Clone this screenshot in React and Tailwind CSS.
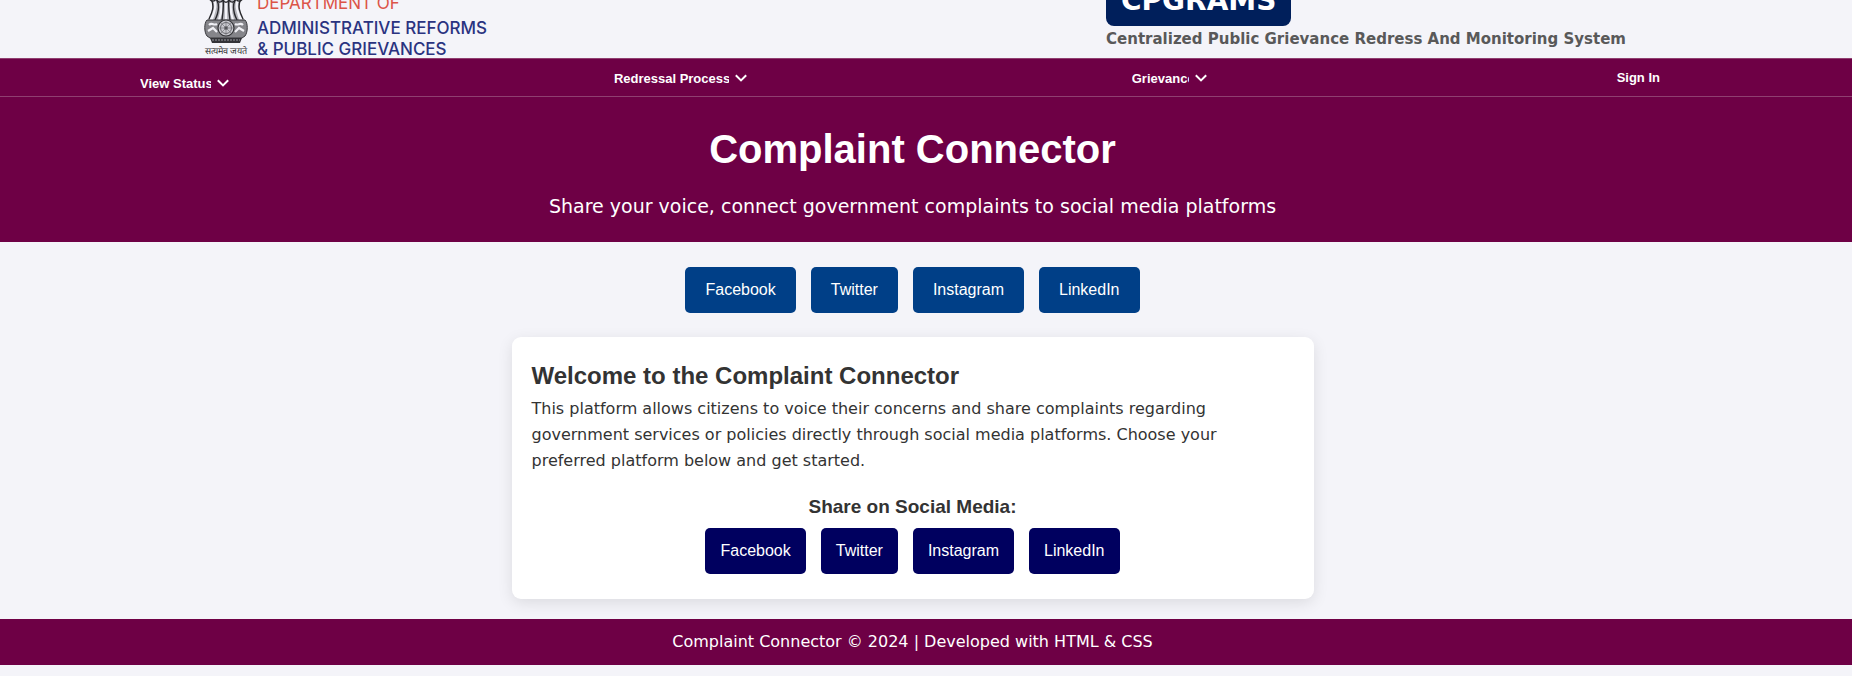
const platforms = [
  { name: 'Facebook', url: 'https://www.facebook.com' },
  { name: 'Twitter', url: 'https://twitter.com' },
  { name: 'Instagram', url: 'https://www.instagram.com' },
  { name: 'LinkedIn', url: 'https://www.linkedin.com' },
];

function Emblem() {
  return (
    <svg viewBox="0 0 44 66" className="w-11" fill="none" aria-hidden="true">
      <path d="M7 0h30l-2 42H9z" fill="#b4b4ba" />
      <path d="M4 17c0-8 2-14 5-17h26c3 3 5 9 5 17l-3 5H7z" fill="#4a4a4f" />
      <path d="M10 22c3 6 0 12-2 19M17 24c1 6 0 12-2 18M22 22v20M27 24c-1 6 0 12 2 18M34 22c-3 6 0 12 2 19" stroke="#f4f4f9" strokeWidth="2.200" strokeLinecap="round" />
      <g stroke="#29292d" strokeWidth="1.400" strokeLinecap="round">
        <path d="M7 21c4 7 1 14-2 20M13 22c3 7 1 14-2 20M19 21c1 8 0 14-1 21M25 21c-1 8 0 14 1 21M31 22c-3 7-1 14 2 20M37 21c-4 7-1 14 2 20" />
        <path d="M5 20c2 4 5 4 7 1 2 4 5 4 7 1 1 3 5 3 6 0 2 3 5 3 7-1 2 3 5 3 7-1" />
      </g>
      <path d="M3 42h38c3 3 3 12 0 16l-3 2H6l-3-2c-3-4-3-13 0-16z" fill="#85858a" stroke="#38383c" />
      <path d="M5 47c3-3 5 1 8-1M4 53l5-3 4 4M31 46c3 2 5-2 8 1M31 54l4-4 5 3" stroke="#f0f0f5" strokeWidth="2.200" />
      <circle cx="22" cy="50" r="8" fill="#c8c8ce" stroke="#333337" strokeWidth="1.200" />
      <circle cx="22" cy="50" r="5.500" stroke="#66666b" />
      <path d="M22 43v14M15 50h14M17 45l10 10M27 45L17 55" stroke="#77777c" strokeWidth=".7" />
      <circle cx="22" cy="50" r="1.800" fill="#55555a" />
      <path d="M6 60h32l-2 5H8z" fill="#333338" />
      <path d="M8 62h28" stroke="#9a9aa0" strokeDasharray="2 1" />
    </svg>
  );
}

function NavSelect({ label, className }) {
  return (
    <div className={`relative h-5 ${className}`}>
      <select
        aria-label={label}
        className="block h-5 w-full appearance-none bg-transparent pr-[25px] pl-1 text-[13px] leading-[19px] font-bold text-white"
      >
        <option className="text-black">{label}</option>
      </select>
      <svg viewBox="0 0 12 8" className="pointer-events-none absolute top-[6px] right-[7px] w-3" fill="none" stroke="white" strokeWidth="2" aria-hidden="true">
        <path d="M.8 1.200L6 6.400l5.200-5.200" />
      </svg>
    </div>
  );
}

function PlatformLinks({ className }) {
  return platforms.map((p) => (
    <a key={p.name} href={p.url} className={`rounded-[5px] py-[10px] font-['Liberation_Sans',Arial,sans-serif] text-base leading-[26px] text-white ${className}`}>
      {p.name}
    </a>
  ));
}

export default function App() {
  return (
    <div className="min-h-screen bg-[#f4f4f9] font-['DejaVu_Sans',Verdana,sans-serif] text-base leading-[26px] text-[#333]">
      <header className="flex h-[58px] items-end justify-between overflow-hidden pr-[226px] pl-[204px]">
        <div className="flex items-end gap-[9px]">
          <div className="flex flex-col items-center">
            <Emblem />
            <span lang="hi" className="text-[9px] leading-[14px] whitespace-nowrap text-[#333]">सत्यमेव जयते</span>
          </div>
          <div className="flex flex-col gap-1 font-[Inter,sans-serif] text-[17px] leading-[17px] font-medium text-[#2a3380]">
            <p className="mb-1 font-normal text-[#dc5548]">DEPARTMENT OF</p>
            <p>ADMINISTRATIVE REFORMS</p>
            <p>&amp; PUBLIC GRIEVANCES</p>
          </div>
        </div>
        <div className="flex flex-col items-start pb-[6px]">
          <span className="rounded-lg bg-[#001f5b] px-[15px] pt-[5px] pb-1 text-[28px] leading-[42px] font-bold text-white">CPGRAMS</span>
          <p className="text-[15px] font-bold text-[#595959]">Centralized Public Grievance Redress And Monitoring System</p>
        </div>
      </header>

      <div className="bg-[#6e0045] text-white">
        <nav className="flex h-[39px] items-start justify-between border-y border-t-[#8f3f70] border-b-[#8f3f70] pt-[9px] pr-[163px] pl-[136px] font-['Liberation_Sans',Arial,sans-serif]">
          <NavSelect label="View Status" className="mt-[5px] w-[100px]" />
          <NavSelect label="Redressal Process" className="w-[144px]" />
          <NavSelect label="Grievance" className="w-[86px]" />
          <a href="#signin" className="px-[29px] text-[13px] leading-5 font-bold">Sign In</a>
        </nav>
        <div className="pt-5 pr-[27px] pb-5 text-center">
          <h1 className="font-['Liberation_Sans',Arial,sans-serif] text-[40px] leading-[64px] font-bold">Complaint Connector</h1>
          <p className="mt-[10px] text-[19px] leading-[31px]">Share your voice, connect government complaints to social media platforms</p>
        </div>
      </div>

      <main className="flex flex-col items-center pt-[25px] pr-[27px] pb-5">
        <div className="flex gap-[15px]">
          <PlatformLinks className="bg-[#003f87] px-5" />
        </div>
        <section className="mt-6 w-full max-w-[802px] rounded-[9px] bg-white px-5 pt-5 pb-[25px] shadow-[0_4px_15px_rgba(0,0,0,0.1)]">
          <h2 className="font-['Liberation_Sans',Arial,sans-serif] text-2xl leading-[38px] font-bold">Welcome to the Complaint Connector</h2>
          <p className="pt-px">
            This platform allows citizens to voice their concerns and share complaints regarding government services or
            policies directly through social media platforms. Choose your preferred platform below and get started.
          </p>
          <h3 className="mt-[18px] text-center font-['Liberation_Sans',Arial,sans-serif] text-[19px] leading-[30px] font-bold">Share on Social Media:</h3>
          <div className="mt-[6px] flex justify-center gap-[15px]">
            <PlatformLinks className="bg-[#00005f] px-[15px]" />
          </div>
        </section>
      </main>

      <footer className="bg-[#6e0045] py-[10px] pr-[27px] text-center text-white">
        <p>Complaint Connector © 2024 | Developed with HTML &amp; CSS</p>
      </footer>
    </div>
  );
}
